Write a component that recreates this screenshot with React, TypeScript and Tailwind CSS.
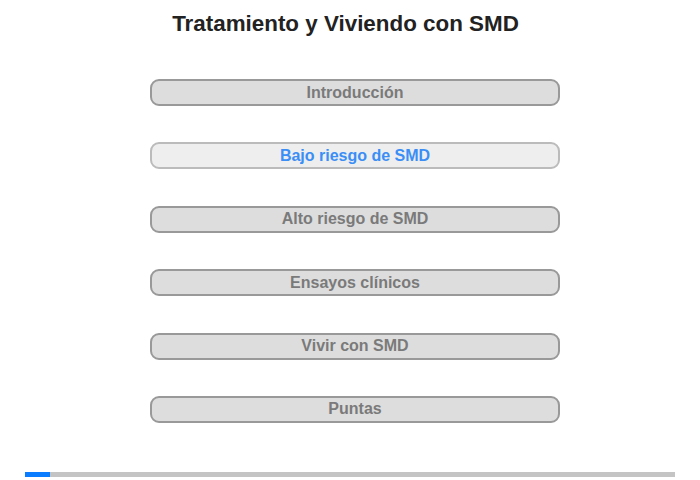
const items = [
  { label: "Introducción", active: false },
  { label: "Bajo riesgo de SMD", active: true },
  { label: "Alto riesgo de SMD", active: false },
  { label: "Ensayos clínicos", active: false },
  { label: "Vivir con SMD", active: false },
  { label: "Puntas", active: false },
];

export default function App() {
  return (
    <div className="w-[700px] h-[480px] bg-white flex flex-col font-['Liberation_Sans',Arial,sans-serif]">
      <h1 className="pt-[11px] pr-[9px] text-center text-[22.4px] leading-[25px] font-bold text-[#222]">
        Tratamiento y Viviendo con SMD
      </h1>

      <div className="mt-[43px] ml-[150px] w-[410px] flex flex-col gap-[36.4px]">
        {items.map((it) =>
          it.active ? (
            <div
              key={it.label}
              className="h-[27px] rounded-[9px] border-2 border-[#bbb] bg-[#eee] flex items-center justify-center text-[16px] font-bold text-[#3b8ef6]"
            >
              {it.label}
            </div>
          ) : (
            <div
              key={it.label}
              className="h-[27px] rounded-[9px] border-2 border-[#999] bg-[#ddd] flex items-center justify-center text-[16px] font-bold text-[#7a7a7a]"
            >
              {it.label}
            </div>
          )
        )}
      </div>

      {/* progress */}
      <div className="mt-auto mb-[3px] mx-[25px] h-[5px] bg-[#c4c4c4] flex">
        <div className="w-[25px] h-full bg-[#0a7cff]" />
      </div>
    </div>
  );
}
